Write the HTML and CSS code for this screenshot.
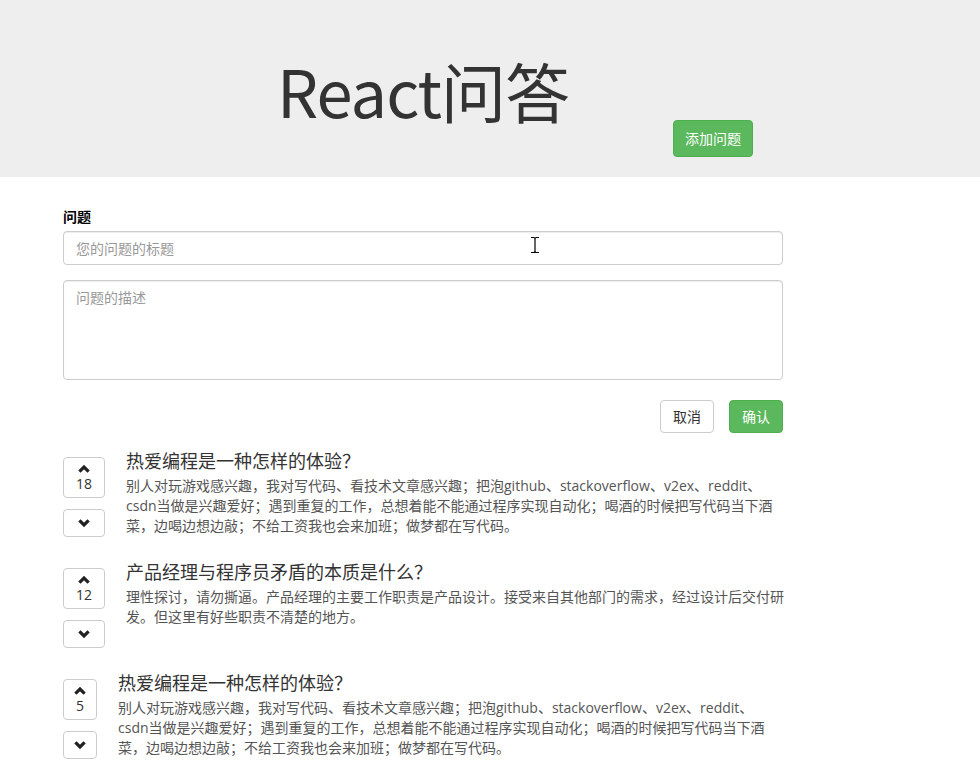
FILE: index.html
```html
<!DOCTYPE html>
<html lang="zh-CN">
<head>
<meta charset="utf-8">
<title>React问答</title>
<link rel="stylesheet" href="styles.css">
</head>
<body>
<header class="jumbotron">
  <div class="container header-inner">
    <h1 class="site-title">React问答</h1>
    <button class="btn btn-success btn-add">添加问题</button>
  </div>
</header>

<main class="container">
  <form class="question-form">
    <div class="form-group">
      <label class="form-label">问题</label>
      <div class="input-wrap">
        <input class="form-control" type="text" placeholder="您的问题的标题">
        <svg class="ibeam" width="10" height="18" viewBox="0 0 10 18"><path d="M1 1.5h2.5M6.5 1.5H9M5 2.5v13M1 16.5h2.5M6.5 16.5H9M3.5 1.5Q5 1.5 5 3M6.5 1.5Q5 1.5 5 3M3.5 16.5Q5 16.5 5 15M6.5 16.5Q5 16.5 5 15" stroke="#000" stroke-width="1.2" fill="none"/></svg>
      </div>
    </div>
    <div class="form-group">
      <textarea class="form-control textarea" placeholder="问题的描述"></textarea>
    </div>
    <div class="form-actions">
      <button type="button" class="btn btn-default">取消</button>
      <button type="button" class="btn btn-success">确认</button>
    </div>
  </form>

  <div class="question-list">
    <div class="media">
      <div class="vote">
        <button class="btn btn-default vote-up"><svg class="chev" width="12" height="9" viewBox="0 0 12 9"><path d="M1.4 7.6 6 3 10.6 7.6" stroke="#222" stroke-width="3.2" fill="none"/></svg><span class="count">18</span></button>
        <button class="btn btn-default vote-down"><svg class="chev" width="12" height="9" viewBox="0 0 12 9"><path d="M1.4 1.4 6 6 10.6 1.4" stroke="#222" stroke-width="3.2" fill="none"/></svg></button>
      </div>
      <div class="media-body">
        <h4 class="media-heading">热爱编程是一种怎样的体验？</h4>
        <p class="desc">别人对玩游戏感兴趣，我对写代码、看技术文章感兴趣；把泡github、stackoverflow、v2ex、reddit、csdn当做是兴趣爱好；遇到重复的工作，总想着能不能通过程序实现自动化；喝酒的时候把写代码当下酒菜，边喝边想边敲；不给工资我也会来加班；做梦都在写代码。</p>
      </div>
    </div>

    <div class="media">
      <div class="vote">
        <button class="btn btn-default vote-up"><svg class="chev" width="12" height="9" viewBox="0 0 12 9"><path d="M1.4 7.6 6 3 10.6 7.6" stroke="#222" stroke-width="3.2" fill="none"/></svg><span class="count">12</span></button>
        <button class="btn btn-default vote-down"><svg class="chev" width="12" height="9" viewBox="0 0 12 9"><path d="M1.4 1.4 6 6 10.6 1.4" stroke="#222" stroke-width="3.2" fill="none"/></svg></button>
      </div>
      <div class="media-body">
        <h4 class="media-heading">产品经理与程序员矛盾的本质是什么？</h4>
        <p class="desc">理性探讨，请勿撕逼。产品经理的主要工作职责是产品设计。接受来自其他部门的需求，经过设计后交付研发。但这里有好些职责不清楚的地方。</p>
      </div>
    </div>

    <div class="media">
      <div class="vote">
        <button class="btn btn-default vote-up"><svg class="chev" width="12" height="9" viewBox="0 0 12 9"><path d="M1.4 7.6 6 3 10.6 7.6" stroke="#222" stroke-width="3.2" fill="none"/></svg><span class="count">5</span></button>
        <button class="btn btn-default vote-down"><svg class="chev" width="12" height="9" viewBox="0 0 12 9"><path d="M1.4 1.4 6 6 10.6 1.4" stroke="#222" stroke-width="3.2" fill="none"/></svg></button>
      </div>
      <div class="media-body">
        <h4 class="media-heading">热爱编程是一种怎样的体验？</h4>
        <p class="desc">别人对玩游戏感兴趣，我对写代码、看技术文章感兴趣；把泡github、stackoverflow、v2ex、reddit、csdn当做是兴趣爱好；遇到重复的工作，总想着能不能通过程序实现自动化；喝酒的时候把写代码当下酒菜，边喝边想边敲；不给工资我也会来加班；做梦都在写代码。</p>
      </div>
    </div>
  </div>
</main>
</body>
</html>
```

FILE: styles.css
```css
* { box-sizing: border-box; }

html, body {
  margin: 0;
  padding: 0;
  background: #fff;
}

body {
  font-family: "Open Sans", "Noto Sans CJK SC", sans-serif;
  font-size: 14px;
  line-height: 20px;
  color: #333;
  overflow: hidden;
}

.container {
  width: 720px;
  margin-left: 63px;
}

/* header */
.jumbotron {
  background: #eee;
  height: 177px;
}

.header-inner {
  display: flex;
  align-items: flex-start;
  height: 177px;
}

.site-title {
  margin: 47px 0 0 214px;
  font-family: "Noto Sans CJK SC", sans-serif;
  font-size: 65px;
  line-height: 86px;
  font-weight: 400;
  color: #333;
  letter-spacing: -1px;
}

.btn {
  display: inline-block;
  font-family: "Noto Sans CJK SC", sans-serif;
  font-size: 14px;
  line-height: 19px;
  padding: 6px 12px;
  border: 1px solid transparent;
  border-radius: 4px;
  cursor: pointer;
  text-align: center;
}

.btn-success {
  background: #5cb85c;
  border-color: #4cae4c;
  color: #fff;
}

.btn-default {
  background: #fff;
  border-color: #ccc;
  color: #333;
}

.btn-add {
  margin: 120px 30px 0 auto;
  padding: 8px 11px;
  height: 37px;
}

/* form */
.question-form {
  padding-top: 29px;
}

.form-group {
  margin-bottom: 15px;
}

.form-label {
  display: block;
  font-family: "Noto Sans CJK SC", sans-serif;
  font-weight: 700;
  color: #000;
  margin-bottom: 5px;
}

.input-wrap {
  position: relative;
}

.form-control {
  display: block;
  width: 100%;
  height: 34px;
  padding: 6px 12px;
  font-family: "Noto Sans CJK SC", sans-serif;
  font-size: 14px;
  line-height: 20px;
  color: #555;
  background: #fff;
  border: 1px solid #ccc;
  border-radius: 4px;
  box-shadow: inset 0 1px 1px rgba(0,0,0,.075);
}

.form-control::placeholder {
  color: #999;
}

.textarea {
  height: 100px;
  resize: none;
}

.ibeam {
  position: absolute;
  left: 467px;
  top: 5px;
}

.form-actions {
  display: flex;
  justify-content: flex-end;
  gap: 15px;
  margin-top: 20px;
}

/* questions */
.question-list {
  padding-top: 24px;
}

.media {
  display: flex;
  align-items: flex-start;
  gap: 21px;
  margin-bottom: 31px;
}

.vote {
  display: flex;
  flex-direction: column;
  gap: 11px;
  flex: none;
}

.vote-up {
  display: flex;
  flex-direction: column;
  align-items: center;
  padding: 6px 12px 3px;
  height: 41px;
}

.vote-down {
  display: flex;
  justify-content: center;
  align-items: center;
  padding: 0 12px;
  height: 28px;
}

.chev {
  display: block;
  flex: none;
  margin: 0 -2px;
}

.count {
  display: block;
  font-family: "Open Sans", sans-serif;
  line-height: 20px;
  font-size: 14px;
  color: #333;
  margin-top: 1px;
}

.media-body {
  flex: none;
  width: 660px;
  margin-top: -7px;
}

.media-heading {
  margin: 0 0 4px;
  font-family: "Open Sans", "Noto Sans CJK SC", sans-serif;
  font-size: 18px;
  line-height: 22px;
  font-weight: 400;
  color: #333;
}

.desc {
  margin: 0;
  font-size: 14px;
  line-height: 20px;
  color: #555;
}
```
